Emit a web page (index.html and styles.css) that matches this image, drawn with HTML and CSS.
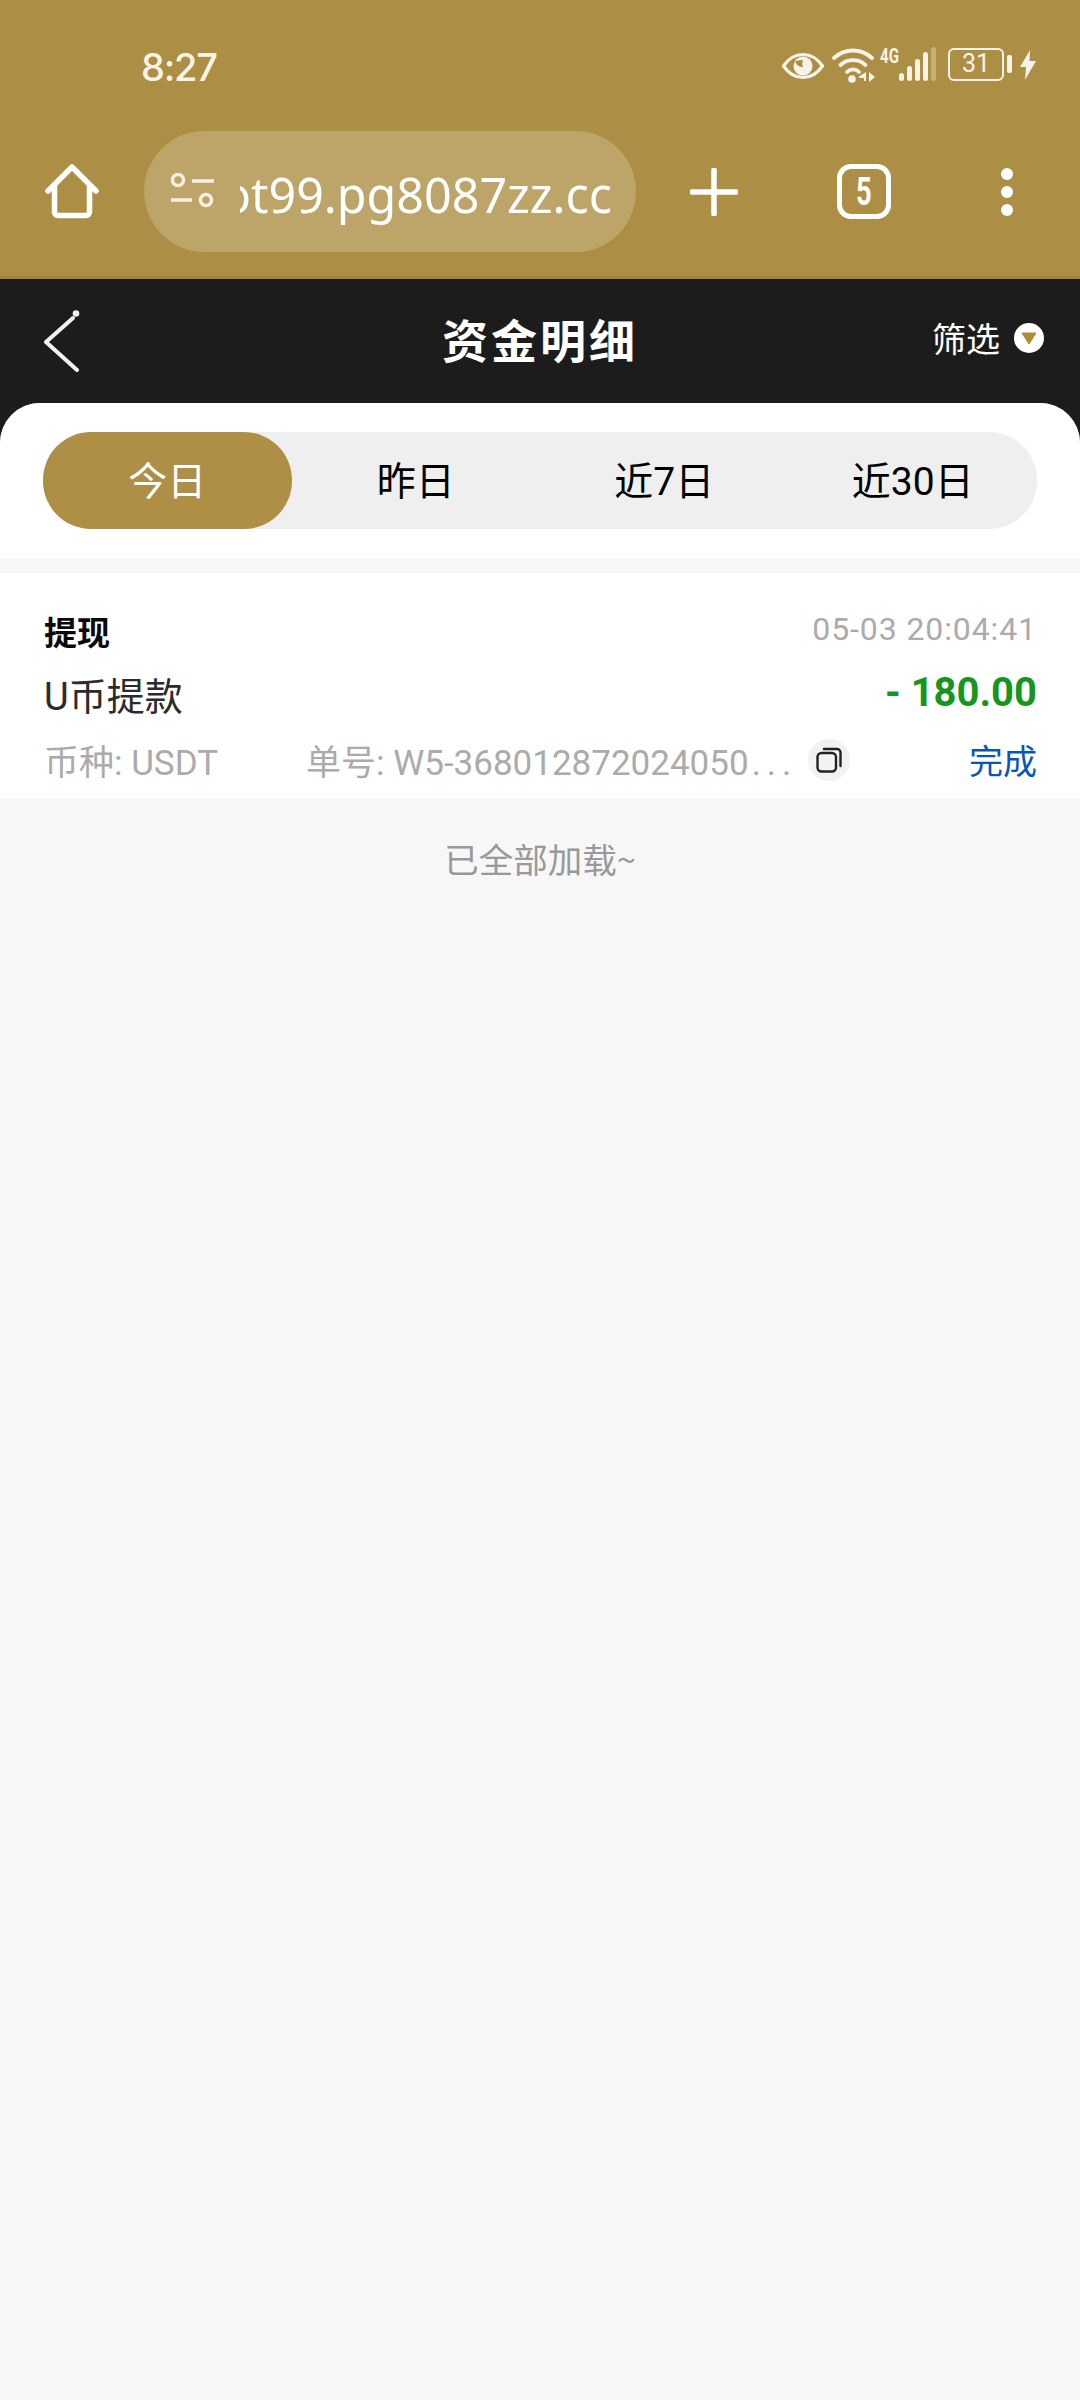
FILE: index.html
```html
<!DOCTYPE html>
<html lang="zh-CN">
<head>
<meta charset="utf-8">
<title>资金明细</title>
<link rel="stylesheet" href="styles.css">
</head>
<body>
<header class="chrome">
  <div class="status">
    <span class="time">8:27</span>
    <div class="status-icons">
      <svg class="ic-eye" viewBox="0 0 42 28"><path d="M1.5 14C7 6 13.500 2.500 21 2.500S35 6 40.500 14C35 22 28.500 25.500 21 25.500S7 22 1.500 14Z" fill="none" stroke="#f7f2ea" stroke-width="3.200"/><circle cx="21" cy="14" r="9.500" fill="#f7f2ea"/><path d="M13 9.500c2 4.500 5 6 8 5.500-1-2-1-5 0-7-3 0-6 .5-8 1.500Z" fill="#ad8e45"/></svg>
      <svg class="ic-wifi" viewBox="0 0 44 36"><g fill="none" stroke="#f7f2ea" stroke-width="3.800" stroke-linecap="round"><path d="M2 11C13 1 29 1 40 11"/><path d="M8.500 18C15.500 11.500 26.500 11.500 33.500 18"/><path d="M15 25C18.500 21.500 23.500 21.500 27 25"/></g><circle cx="20" cy="32" r="3.800" fill="#f7f2ea"/><path d="M34 25v9h-2v-3h-5v-1.500ZM37 25l6 5-6 5Z" fill="#f7f2ea"/></svg>
      <span class="net">4G</span>
      <div class="bars"><i class="b1"></i><i class="b2"></i><i class="b3"></i><i class="b4"></i><i class="b5"></i></div>
      <div class="batt"><span class="batt-box">31</span><i class="batt-nub"></i></div>
      <svg class="ic-bolt" viewBox="0 0 16 30"><path d="M10 0 0 17h6l-1 13L16 11H9.500Z" fill="#f7f2ea"/></svg>
    </div>
  </div>
  <div class="toolbar">
    <svg class="ic-home" viewBox="0 0 54 56"><path d="M3 28 27 4l24 24M9.500 23v26a3.500 3.500 0 0 0 3.500 3.500h28a3.500 3.500 0 0 0 3.500-3.500V23" fill="none" stroke="#fff" stroke-width="5.500" stroke-linecap="round" stroke-linejoin="round"/></svg>
    <div class="pill">
      <svg class="ic-site" viewBox="0 0 44 38"><g fill="none" stroke="#f6f0e2" stroke-width="3.500"><circle cx="8" cy="7" r="5.500"/><circle cx="36" cy="27" r="5.500"/><path d="M22 8h22M1 27h21"/></g></svg>
      <div class="addr"><span>ot99.pg8087zz.cc</span></div>
    </div>
    <div class="cell cell-plus"><svg class="ic-plus" viewBox="0 0 48 48"><path d="M24 2v44M2 24h44" stroke="#fff" stroke-width="5.500" stroke-linecap="round"/></svg></div>
    <div class="cell cell-tabs"><span class="tabs-count"><span class="tabs-digit">5</span></span></div>
    <div class="cell cell-menu"><svg class="ic-menu" viewBox="0 0 12 48"><circle cx="6" cy="6" r="6" fill="#fff"/><circle cx="6" cy="24" r="6" fill="#fff"/><circle cx="6" cy="42" r="6" fill="#fff"/></svg></div>
  </div>
</header>

<nav class="nav">
  <svg class="ic-back" viewBox="0 0 36 62"><path d="M29 8 2 32l31 28" fill="none" stroke="#f2f2f2" stroke-width="4" stroke-linecap="round" stroke-linejoin="round"/><circle cx="32" cy="3.500" r="3.300" fill="#f2f2f2"/></svg>
  <h1 class="title">资金明细</h1>
  <div class="filter"><span>筛选</span><span class="filter-dot"><svg viewBox="0 0 16 13"><path d="M1 1h14L8 12Z" fill="#b08b36" stroke="#b08b36" stroke-linejoin="round"/></svg></span></div>
</nav>

<main class="panel">
  <div class="tabs-wrap">
    <div class="tabs">
      <div class="tab tab-active">今日</div>
      <div class="tab">昨日</div>
      <div class="tab">近7日</div>
      <div class="tab">近30日</div>
    </div>
  </div>
  <section class="record">
    <div class="row row-1"><strong class="kind">提现</strong><span class="date">05-03 20:04:41</span></div>
    <div class="row row-2"><span class="desc">U币提款</span><span class="amount">- 180.00</span></div>
    <div class="row row-3">
      <span class="coin">币种: USDT</span>
      <span class="order">单号: W5-368012872024050<span class="dots">...</span></span>
      <span class="copy"><svg viewBox="0 0 26 26"><rect x="1.500" y="6" width="18.500" height="18.500" rx="4" fill="none" stroke="#222" stroke-width="2.400"/><path d="M8 2h13a3.500 3.500 0 0 1 3.500 3.500V19" fill="none" stroke="#222" stroke-width="2.400" stroke-linecap="round"/></svg></span>
      <span class="state">完成</span>
    </div>
  </section>
  <p class="end">已全部加载~</p>
</main>
</body>
</html>
```
FILE: styles.css
```css
* { box-sizing: border-box; }
html, body { margin: 0; padding: 0; }
body {
  width: 1080px;
  height: 2400px;
  overflow: hidden;
  background: #1c1c1c;
  font-family: "Roboto", "Noto Sans CJK SC", sans-serif;
}
svg { display: block; }

.chrome { background: #ad8e45; height: 279px; border-bottom: 3px solid #a08340; }

.status { height: 131px; display: flex; justify-content: space-between; padding: 0 44px 0 141px; }
.time { font-family: "Inter", sans-serif; font-size: 38px; font-weight: 500; line-height: 44px; margin-top: 45px; color: #fbf3e6; letter-spacing: -1.200px; }
.status-icons { display: flex; align-items: flex-start; padding-top: 47px; }
.ic-eye { width: 42px; height: 28px; margin-top: 5px; }
.ic-wifi { width: 44px; height: 36px; margin-left: 8px; }
.net { display: block; font-family: "Roboto", sans-serif; font-size: 21px; line-height: 18px; font-weight: 700; color: #f7f2ea; margin-left: 4px; width: 19px; white-space: nowrap; transform: scaleX(0.72); transform-origin: left center; }
.bars { display: flex; align-items: flex-end; gap: 3px; height: 34px; margin-left: 0; }
.bars i { display: block; width: 5px; border-radius: 3px; background: #f7f2ea; }
.b1 { height: 8px; }
.b2 { height: 15px; }
.b3 { height: 22px; }
.b4 { height: 29px; }
.b5 { height: 34px; background: #c6ae76 !important; }
.batt { display: flex; align-items: center; margin-left: 12px; height: 34px; }
.batt-box { width: 56px; height: 33px; border: 2.500px solid #f7f2ea; border-radius: 6px; color: #f7f2ea; font-size: 25px; line-height: 28px; text-align: center; }
.batt-nub { width: 5px; height: 18px; margin-left: 3px; border-radius: 2px; background: #f7f2ea; }
.ic-bolt { width: 16px; height: 30px; margin: 3px 0 0 8px; }

.toolbar { height: 145px; display: flex; align-items: flex-start; padding-left: 45px; }
.ic-home { width: 54px; height: 56px; margin-top: 32px; }
.pill { width: 492px; height: 121px; margin-left: 45px; border-radius: 61px; background: #bda569; display: flex; align-items: center; padding: 0 24px 0 26px; }
.ic-site { width: 44px; height: 38px; flex: none; }
.addr { flex: 1; overflow: hidden; margin-left: 26px; padding-top: 4px; display: flex; justify-content: flex-end; white-space: nowrap; }
.addr span { font-family: "Noto Sans", sans-serif; font-size: 48.400px; line-height: 66px; color: #fff; font-weight: 400; }
.cell { height: 121px; display: flex; align-items: center; justify-content: center; }
.cell-plus { width: 156px; }
.cell-tabs { width: 144px; }
.cell-menu { width: 142px; }
.ic-plus { width: 48px; height: 48px; }
.tabs-count { width: 54px; height: 55px; border: 5.500px solid #fff; border-radius: 14px; display: flex; align-items: center; justify-content: center; }
.tabs-digit { display: block; color: #fff; font-family: "Roboto", sans-serif; font-weight: 700; font-size: 38px; line-height: 44px; transform: scaleX(0.72); }
.ic-menu { width: 12px; height: 48px; }

.nav { height: 124px; display: grid; grid-template-columns: 1fr auto 1fr; align-items: center; padding: 0 36px 6px 36px; }
.ic-back { width: 36px; height: 62px; margin: 6px 0 0 8px; }
.title { margin: 0; color: #fff; font-family: "Noto Sans CJK SC", sans-serif; font-size: 46px; line-height: 60px; font-weight: 700; letter-spacing: 3px; }
.filter { display: flex; justify-content: flex-end; align-items: center; gap: 14px; color: #fff; font-family: "Noto Sans CJK SC", sans-serif; font-size: 34px; line-height: 48px; }
.filter-dot { width: 30px; height: 30px; border-radius: 50%; background: #fff; display: flex; align-items: center; justify-content: center; }
.filter-dot svg { width: 16px; height: 13px; }

.panel { height: 1997px; background: #f7f7f7; border-radius: 40px 40px 0 0; overflow: hidden; font-family: "Noto Sans CJK SC", sans-serif; }
.tabs-wrap { background: #fff; padding: 29px 43px 30px; height: 155px; }
.tabs { height: 97px; display: grid; grid-template-columns: repeat(4, 1fr); background: #efefef; border-radius: 48px; }
.tab { display: flex; align-items: center; justify-content: center; border-radius: 48px; font-family: "Roboto", "Noto Sans CJK SC", sans-serif; font-size: 39px; line-height: 50px; padding-top: 3px; color: #000; }
.tab-active { background: #ae8f45; color: #fff; }

.record { margin-top: 15px; background: #fff; height: 225px; padding: 0 43px 0 44px; font-family: "Roboto", "Noto Sans CJK SC", sans-serif; }
.row { display: flex; align-items: center; justify-content: space-between; }
.row-1 { height: 88px; padding-top: 28px; }
.row-2 { height: 64px; }
.row-3 { height: 68px; justify-content: flex-start; }
.kind { font-size: 33px; font-weight: 700; color: #0a0a0a; }
.date { font-size: 32px; letter-spacing: 0.900px; margin-bottom: 4px; color: #ababab; }
.desc { font-size: 38px; color: #2b2b2b; }
.amount { font-size: 40px; font-weight: 700; color: #16951f; margin-bottom: 2px; }
.coin { width: 262px; flex: none; font-size: 35px; color: #ababab; white-space: nowrap; }
.order { width: 502px; flex: none; font-size: 35px; color: #ababab; white-space: nowrap; overflow: hidden; }
.dots { letter-spacing: 6px; margin-left: 3px; }
.copy { width: 42px; height: 42px; flex: none; margin-top: 2px; border-radius: 50%; background: #f2f2f2; display: flex; align-items: center; justify-content: center; }
.copy svg { width: 26px; height: 26px; }
.state { margin-left: auto; font-size: 34px; color: #0a55b8; }

.end { margin: 0; padding-top: 37px; text-align: center; font-size: 34.500px; line-height: 46px; color: #999; }
```
